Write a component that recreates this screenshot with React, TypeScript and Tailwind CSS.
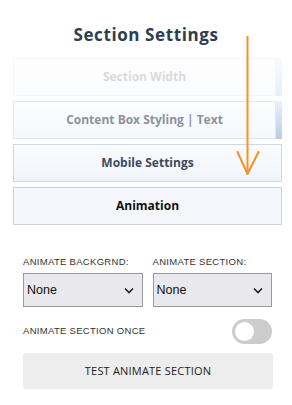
const tabs = [
  { label: "Section Width", fade: "opacity-20", strip: true },
  { label: "Content Box Styling | Text", fade: "opacity-60", strip: true },
];

const Chevron = () => (
  <svg width="10" height="7" viewBox="0 0 10 7" fill="none">
    <path d="M1 1.5l4 4 4-4" stroke="#222" strokeWidth="1.6" />
  </svg>
);

const SelectBox = ({ label }: { label: string }) => (
  <div className="flex flex-col gap-[5px] flex-1">
    <span className="font-['Liberation_Sans',sans-serif] text-[9.5px] tracking-[0.3px] text-[#333] leading-[12px]">
      {label}
    </span>
    <div className="h-[34px] bg-[#e9e9ed] border border-[#9a9a9a] flex items-center justify-between pl-[3px] pr-[8px]">
      <span className="font-['Liberation_Sans',sans-serif] text-[12.5px] text-[#111]">None</span>
      <Chevron />
    </div>
  </div>
);

export default function App() {
  return (
    <div className="relative w-[292px] h-[405px] bg-white overflow-hidden font-['Open_Sans',sans-serif]">
      <h1 className="pt-[22px] text-center text-[17px] font-bold tracking-[0.6px] text-[#2c3e50] leading-[26px]">
        Section Settings
      </h1>

      <div className="mt-[10px] pl-[13px] pr-[10px] flex flex-col gap-[5px]">
        {tabs.map((t) => (
          <div key={t.label} className="flex">
            <div
              className={`flex-1 h-[38px] border border-[#cdd9e8] bg-gradient-to-b from-[#fbfcfe] to-[#f0f4fa] flex items-center justify-center text-[12px] font-bold text-[#3d4a5c] ${t.fade}`}
            >
              {t.label}
            </div>
            <div className={`w-[6px] bg-gradient-to-b from-[#dfe8f4] to-[#8aabd9] ${t.fade}`} />
          </div>
        ))}
        <div className="h-[38px] border border-[#cdd9e8] bg-gradient-to-b from-[#fbfcfe] to-[#f0f4fa] flex items-center justify-center text-[12px] font-bold text-[#3d4a5c]">
          Mobile Settings
        </div>
        <div className="h-[38px] border border-[#c5d3e6] bg-[#f5f7fc] flex items-center justify-center text-[12px] font-bold text-[#111]">
          Animation
        </div>
      </div>

      <div className="mt-[31px] pl-[23px] pr-[20px] flex gap-[10px]">
        <SelectBox label="ANIMATE BACKGRND:" />
        <SelectBox label="ANIMATE SECTION:" />
      </div>

      <div className="mt-[12px] pl-[23px] pr-[20px] flex items-center justify-between">
        <span className="font-['Liberation_Sans',sans-serif] text-[9.5px] tracking-[0.3px] text-[#333]">
          ANIMATE SECTION ONCE
        </span>
        <div className="w-[40px] h-[25px] rounded-full bg-[#cccccc] flex items-center pl-[3px]">
          <div className="w-[19px] h-[19px] rounded-full bg-white" />
        </div>
      </div>

      <div className="mt-[9px] ml-[23px] mr-[19px] h-[36px] rounded-[3px] bg-[#ededed] flex items-center justify-center text-[11px] text-[#222] tracking-[0.2px]">
        TEST ANIMATE SECTION
      </div>

      <div className="mt-[16px] ml-[13px] mr-[10px] h-px bg-[#bcd3ea]" />

      <svg
        className="absolute left-0 top-0 pointer-events-none"
        width="292"
        height="405"
        viewBox="0 0 292 405"
        fill="none"
      >
        <path d="M247.5 36 V174" stroke="#f7931e" strokeWidth="2" />
        <path d="M237.5 152 L247.5 174 L258.5 152" stroke="#f7931e" strokeWidth="2" strokeLinejoin="round" strokeLinecap="round" />
      </svg>
    </div>
  );
}
